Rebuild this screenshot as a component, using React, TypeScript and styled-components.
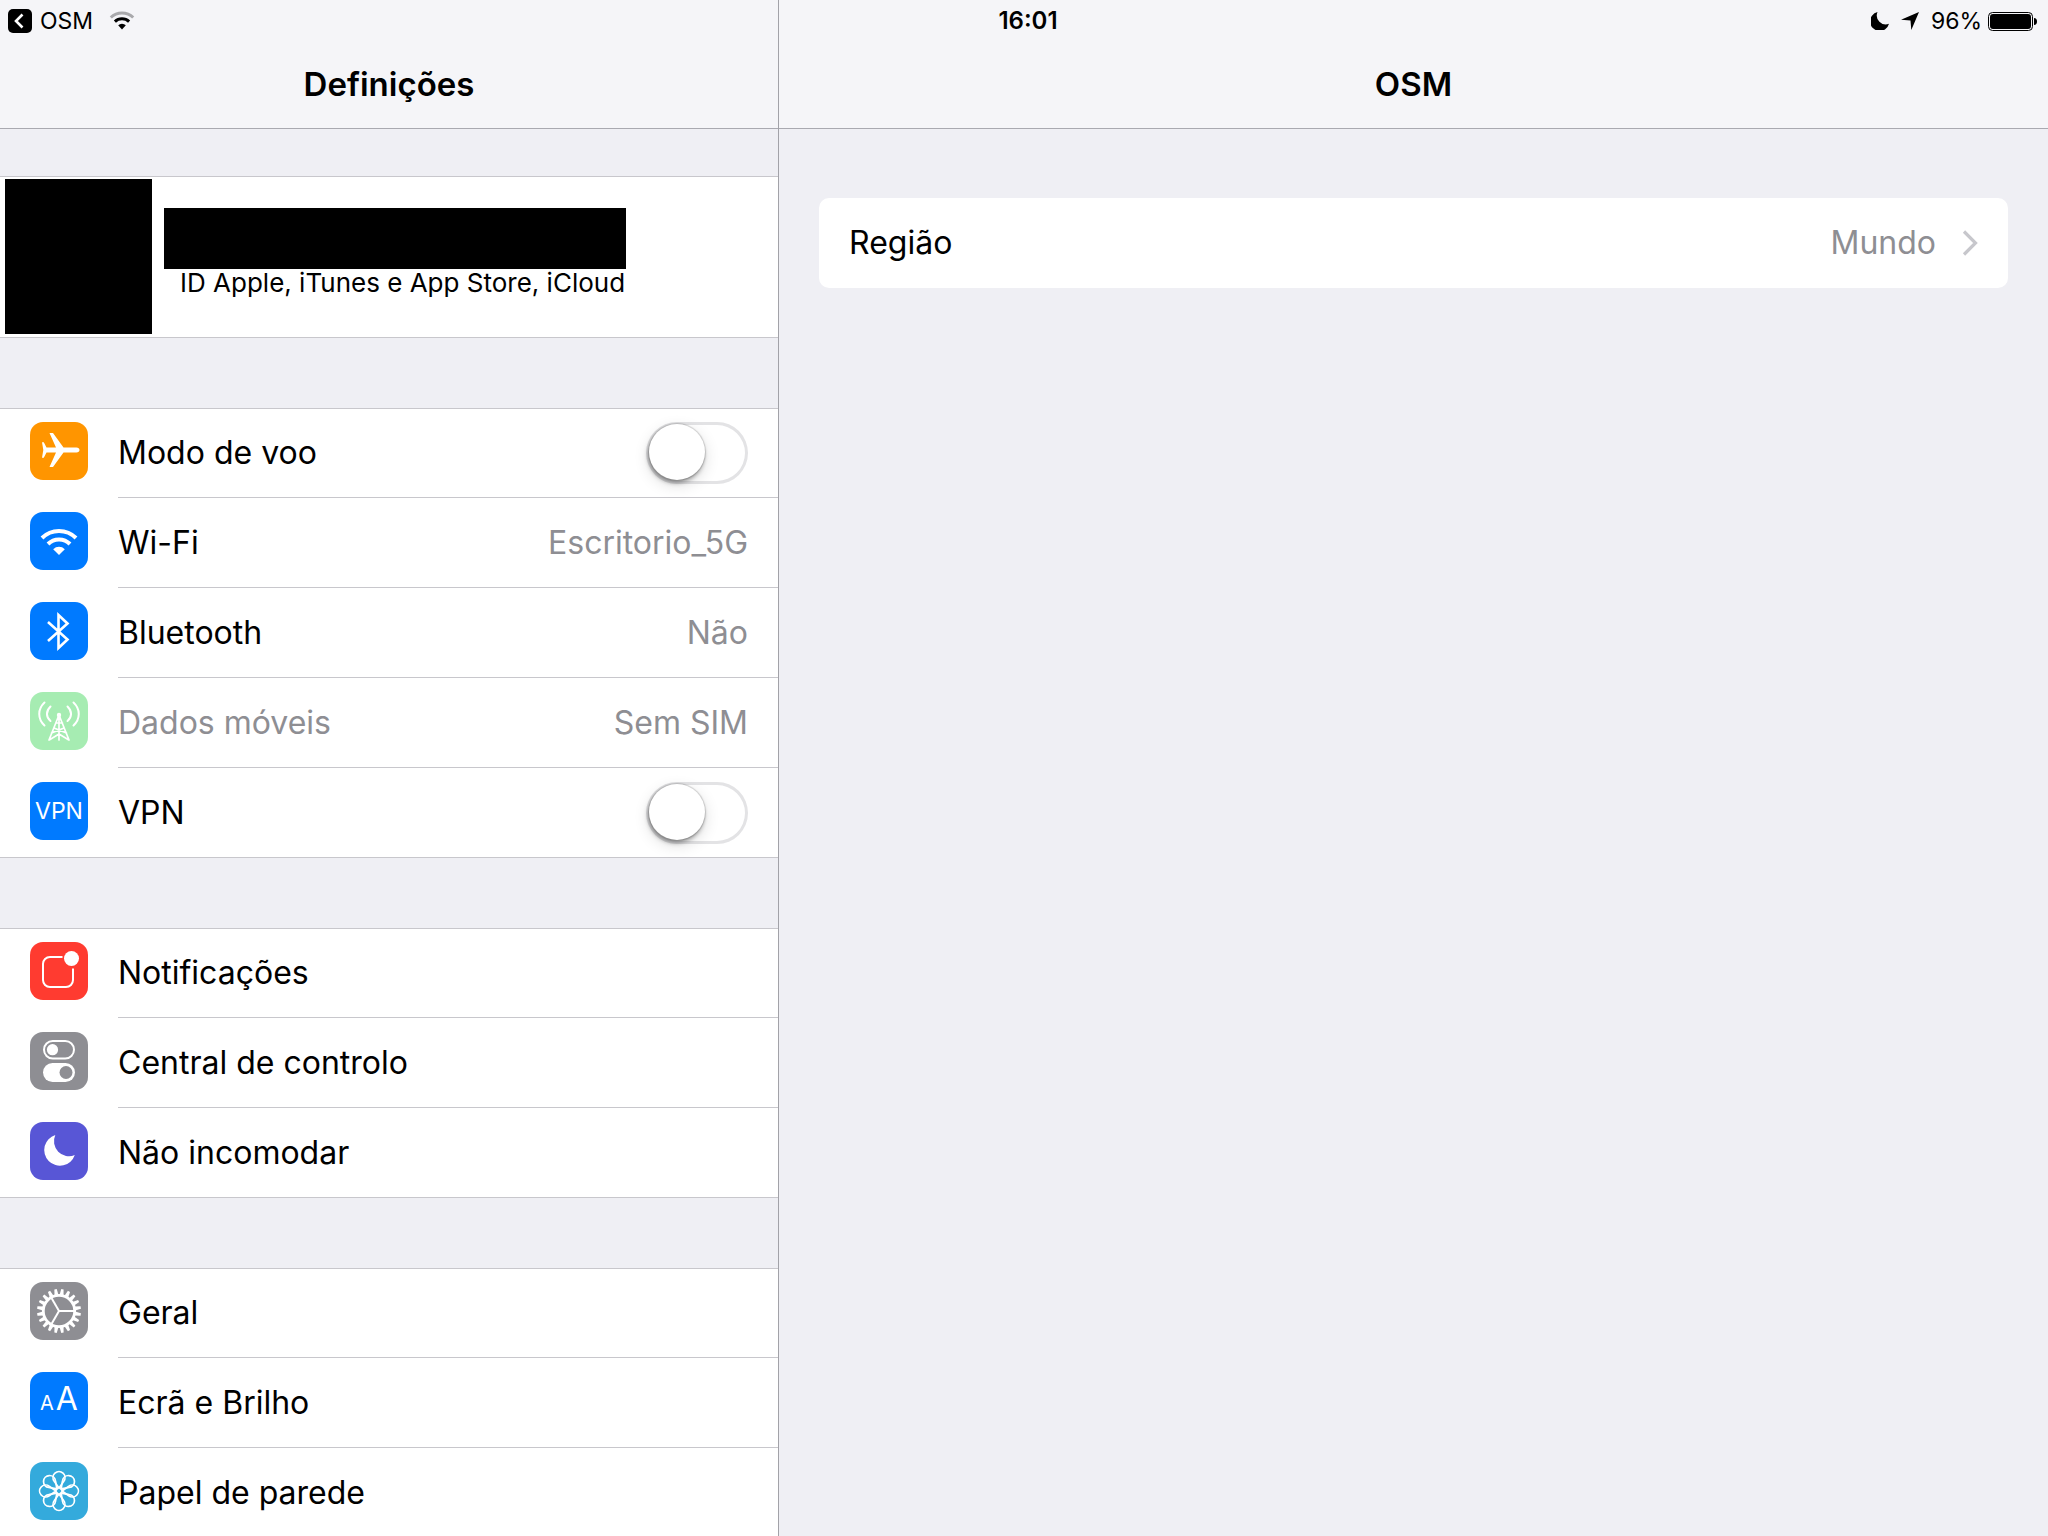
import React from "react";
import styled, { createGlobalStyle } from "styled-components";

const GlobalStyle = createGlobalStyle`
  *, *::before, *::after { box-sizing: border-box; }
  body {
    margin: 0;
    overflow: hidden;
    background: #efeff4;
    color: #000;
    font-family: Inter, "Liberation Sans", sans-serif;
    font-size: 32px;
    line-height: 40px;
  }
  h1, h2, p, ul { margin: 0; padding: 0; font-weight: 400; }
`;

const Screen = styled.div`
  display: grid;
  grid-template-columns: 779px 1fr;
  grid-template-rows: 40px 1fr;
  height: 100vh;
  overflow: hidden;
`;

/* Status bar: shares the first grid row with both panes. */
const StatusBar = styled.header`
  grid-area: 1 / 1 / 2 / -1;
  z-index: 1;
  display: grid;
  grid-template-columns: 1fr auto 1fr;
  align-items: center;
  padding-top: 1px;
  padding-left: 8px;
  font-size: 24px;
`;

const StatusSide = styled.div<{ $end?: boolean }>`
  display: flex;
  align-items: center;
  justify-content: ${(p) => (p.$end ? "flex-end" : "flex-start")};
  padding-right: ${(p) => (p.$end ? "11px" : "0")};
  gap: ${(p) => (p.$end ? "12px" : "16px")};
  font-size: 23px;
`;

const BackLink = styled.a`
  display: flex;
  align-items: center;
  gap: 8px;
  color: inherit;
  text-decoration: none;
`;

const Clock = styled.time`
  font-weight: 600;
`;

const BatteryLevel = styled.span`
  display: flex;
  align-items: center;
  gap: 6px;
`;

const Sidebar = styled.nav`
  grid-area: 1 / 1 / -1 / 2;
  border-right: 1px solid #a2a2a8;
  overflow: hidden;
`;

const Detail = styled.main`
  grid-area: 1 / 2 / -1 / 3;
`;

const TitleBar = styled.div`
  display: flex;
  justify-content: center;
  height: 129px;
  padding-top: 64px;
  background: #f5f5f8;
  border-bottom: 1px solid #a9a9b0;
`;

const Title = styled.h1`
  font-size: 33px;
  font-weight: 600;
`;

const Groups = styled.div`
  display: flex;
  flex-direction: column;
  gap: 70px;
  padding-top: 47px;
`;

const hairlines = "inset 0 1px #c8c7cc, inset 0 -1px #c8c7cc";

const Profile = styled.a`
  display: flex;
  gap: 12px;
  height: 162px;
  padding: 3px 5px;
  background: #fff;
  box-shadow: ${hairlines};
  color: inherit;
  text-decoration: none;
`;

const Avatar = styled.span`
  width: 147px;
  height: 155px;
  background: #000;
`;

const ProfileText = styled.span`
  display: flex;
  flex-direction: column;
  padding-top: 29px;
`;

const ProfileName = styled.span`
  width: 462px;
  height: 61px;
  background: #000;
`;

const ProfileNote = styled.span`
  padding-left: 16px;
  font-size: 26px;
  line-height: 28px;
`;

const Group = styled.ul`
  list-style: none;
  background: #fff;
  box-shadow: ${hairlines};
`;

const rowLayout = `
  display: flex;
  width: 100%;
  padding: 0;
  border: 0;
  background: none;
  color: inherit;
  font: inherit;
  text-align: left;
`;

const RowButton = styled.button`
  ${rowLayout}
`;

const RowLabel = styled.label`
  ${rowLayout}
`;

const RowBody = styled.span<{ $last?: boolean; $dim?: boolean }>`
  display: flex;
  flex: 1;
  align-items: center;
  justify-content: space-between;
  height: 90px;
  padding-right: 30px;
  border-bottom: 1px solid ${(p) => (p.$last ? "transparent" : "#c8c7cc")};
  color: ${(p) => (p.$dim ? "#8e8e93" : "inherit")};
`;

const Value = styled.span`
  color: #8e8e93;
`;

const Tile = styled.span<{ $color: string }>`
  display: flex;
  align-items: center;
  justify-content: center;
  width: 58px;
  height: 58px;
  margin: 14px 30px 0;
  border-radius: 13px;
  overflow: hidden;
  background: ${(p) => p.$color};
  color: #fff;
`;

const TileText = styled.span<{ $size: number }>`
  font-size: ${(p) => p.$size}px;
`;

const Letters = styled.span`
  display: flex;
  align-items: baseline;
  gap: 2px;
`;

const Switch = styled.input`
  appearance: none;
  display: flex;
  width: 102px;
  height: 62px;
  margin: 0;
  padding: 2px 3px;
  border-radius: 31px;
  background: #fff;
  box-shadow: inset 0 0 0 3px #e3e3e5;

  &::before {
    content: "";
    width: 56px;
    height: 56px;
    border-radius: 50%;
    background: #fff;
    box-shadow: 0 0 1px 1px rgba(0, 0, 0, 0.14), -1px 3px 4px rgba(0, 0, 0, 0.35),
      0 5px 16px rgba(0, 0, 0, 0.14);
  }
  &:checked { box-shadow: inset 0 0 0 31px #4cd964; }
  &:checked::before { margin-left: 40px; }
`;

const Card = styled.section`
  margin: 69px 40px 0;
  border-radius: 10px;
  background: #fff;
`;

const CardRow = styled.button`
  ${rowLayout}
  align-items: center;
  height: 90px;
  padding: 0 30px;
  gap: 26px;
`;

const CardLabel = styled.span`
  flex: 1;
`;

const Svg = ({ size = 58, children }: { size?: number; children: React.ReactNode }) => (
  <svg width={size} height={size} viewBox={`0 0 ${size} ${size}`} fill="none" aria-hidden="true">
    {children}
  </svg>
);

const PlaneIcon = () => (
  <Svg>
    <path
      fill="#fff"
      d="M46.500 25.600 C48.300 25.600 49.500 26.600 49.500 28 C49.500 29.400 48.300 30.400 46.500 30.400 H33.500 L23 45 H19.500 L26 30.400 H16.500 L13.800 35.700 H12 L13.300 28 L12 20.300 H13.800 L16.500 25.600 H26 L19.500 11 H23 L33.500 25.600 Z"
    />
  </Svg>
);

const WifiIcon = () => (
  <Svg>
    <g stroke="#fff" strokeWidth="4">
      <path d="M12 26 A24 24 0 0 1 46 26" />
      <path d="M18 32 A15.500 15.500 0 0 1 40 32" />
    </g>
    <path fill="#fff" d="M29 43 L23.200 37.200 A8.200 8.200 0 0 1 34.800 37.200 Z" />
  </Svg>
);

const BluetoothIcon = () => (
  <Svg>
    <path d="M18 20 L37.500 37.500 L28.500 46 V13 L37.500 21.500 L18 39" stroke="#fff" strokeWidth="2.600" />
  </Svg>
);

const CellularIcon = () => (
  <Svg>
    <g stroke="#fff" strokeWidth="2" strokeLinecap="round">
      <path d="M14.500 10.500 C7.500 17 7.500 27 14.500 33.500 M43.500 10.500 C50.500 17 50.500 27 43.500 33.500" />
      <path d="M20.500 14.500 C15.800 19 15.800 25 20.500 29 M37.500 14.500 C42.200 19 42.200 25 37.500 29" />
      <path d="M29 23 L19 48 M29 23 L39 48 M29 23 V48 M26 31 L32.500 31 M24 36 L36.500 41 M34 36 L21.500 41 M20 47.500 L29 42 L38 47.500" strokeWidth="1.700" />
    </g>
    <circle cx="29" cy="23" r="2.200" fill="#fff" />
  </Svg>
);

const NotificationsIcon = () => (
  <Svg>
    <path
      d="M32.500 15 H20 A7 7 0 0 0 13 22 V38 A7 7 0 0 0 20 45 H36 A7 7 0 0 0 43 38 V26.500"
      stroke="#fff"
      strokeWidth="2"
    />
    <circle cx="41.500" cy="16.500" r="7.500" fill="#fff" />
  </Svg>
);

const ControlsIcon = () => (
  <Svg>
    <rect x="14" y="9" width="30" height="17.500" rx="8.750" stroke="#fff" strokeWidth="2" />
    <circle cx="22.500" cy="17.700" r="5.600" fill="#fff" />
    <rect x="13" y="31" width="32" height="19" rx="9.500" fill="#fff" />
    <circle cx="36" cy="40.500" r="6.500" fill="#8e8e93" />
  </Svg>
);

const MoonIcon = () => (
  <Svg>
    <path fill="#fff" d="M25.300 13 A15.700 15.700 0 1 0 44.800 33 A15 15 0 0 1 25.300 13 Z" />
  </Svg>
);

const teeth = Array.from({ length: 20 }, (_, i) => i * 18 + 9);
const spokes = [0, 120, 240];

const GearIcon = () => (
  <Svg>
    <g fill="#fff">
      {teeth.map((a) => (
        <path key={a} d="M45 27 L51 27.800 V30.200 L45 31 Z" transform={`rotate(${a} 29 29)`} />
      ))}
    </g>
    <g stroke="#fff">
      <circle cx="29" cy="29" r="15.700" strokeWidth="2.800" />
      {spokes.map((a) => (
        <path key={a} d="M29 29 H44" strokeWidth="2" transform={`rotate(${a} 29 29)`} />
      ))}
    </g>
  </Svg>
);

const petals = Array.from({ length: 8 }, (_, i) => i * 45);

const FlowerIcon = () => (
  <Svg>
    <g stroke="#fff" strokeWidth="1.700">
      {petals.map((a) => (
        <path
          key={a}
          d="M29 26 L24.200 19.200 A6 6 0 1 1 33.800 19.200 Z"
          transform={`rotate(${a} 29 29)`}
        />
      ))}
      <circle cx="29" cy="29" r="3.300" />
    </g>
  </Svg>
);

type Item = {
  label: string;
  color: string;
  icon: React.ReactNode;
  value?: string;
  toggle?: boolean;
  dim?: boolean;
};

const groups: Item[][] = [
  [
    { label: "Modo de voo", color: "#ff9500", icon: <PlaneIcon />, toggle: true },
    { label: "Wi-Fi", color: "#007aff", icon: <WifiIcon />, value: "Escritorio_5G" },
    { label: "Bluetooth", color: "#007aff", icon: <BluetoothIcon />, value: "Não" },
    { label: "Dados móveis", color: "#a6ecb2", icon: <CellularIcon />, value: "Sem SIM", dim: true },
    { label: "VPN", color: "#007aff", icon: <TileText $size={23}>VPN</TileText>, toggle: true },
  ],
  [
    { label: "Notificações", color: "#ff3b30", icon: <NotificationsIcon /> },
    { label: "Central de controlo", color: "#8e8e93", icon: <ControlsIcon /> },
    { label: "Não incomodar", color: "#5856d6", icon: <MoonIcon /> },
  ],
  [
    { label: "Geral", color: "#8e8e93", icon: <GearIcon /> },
    {
      label: "Ecrã e Brilho",
      color: "#007aff",
      icon: (
        <Letters>
          <TileText $size={20}>A</TileText>
          <TileText $size={32}>A</TileText>
        </Letters>
      ),
    },
    { label: "Papel de parede", color: "#34aadc", icon: <FlowerIcon /> },
  ],
];

const SettingsRow = ({ item, last }: { item: Item; last: boolean }) => {
  const Row = item.toggle ? RowLabel : RowButton;
  return (
    <li>
      <Row>
        <Tile $color={item.color} aria-hidden="true">
          {item.icon}
        </Tile>
        <RowBody $last={last} $dim={item.dim}>
          <span>{item.label}</span>
          {item.value && <Value>{item.value}</Value>}
          {item.toggle && <Switch type="checkbox" aria-label={item.label} />}
        </RowBody>
      </Row>
    </li>
  );
};

export default function App() {
  return (
    <>
      <GlobalStyle />
      <Screen>
        <StatusBar>
          <StatusSide>
            <BackLink href="#osm">
              <Svg size={24}>
                <rect width="24" height="24" rx="5" fill="#000" />
                <path d="M14.500 5.500 L8 12 L14.500 18.500" stroke="#fff" strokeWidth="2.600" />
              </Svg>
              OSM
            </BackLink>
            <Svg size={26}>
              <path d="M1.800 9.500 A16 16 0 0 1 24.200 9.500" stroke="#a9a9ac" strokeWidth="3" />
              <path d="M5.900 13.600 A10.200 10.200 0 0 1 20.100 13.600" stroke="#000" strokeWidth="3" />
              <path d="M13 21.500 L9.200 17.200 A5.400 5.400 0 0 1 16.800 17.200 Z" fill="#000" />
            </Svg>
          </StatusSide>
          <Clock>16:01</Clock>
          <StatusSide $end>
            <Svg size={18}>
              <path fill="#000" d="M6.500 0 A9.600 9.600 0 1 0 18 11.800 A9 9 0 0 1 6.500 0 Z" />
            </Svg>
            <Svg size={18}>
              <path fill="#000" d="M18 0 L10.300 18 L9.500 8.500 L0 7.700 Z" />
            </Svg>
            <BatteryLevel>
              96%
              <svg width="49" height="19" viewBox="0 0 49 19" fill="none" aria-hidden="true">
                <rect x="0.500" y="0.500" width="44" height="18" rx="4" stroke="#000" />
                <rect x="2" y="2" width="41" height="15" rx="3" fill="#000" />
                <path d="M46 6 C48 6 49 7.500 49 9.500 C49 11.500 48 13 46 13 Z" fill="#000" />
              </svg>
            </BatteryLevel>
          </StatusSide>
        </StatusBar>

        <Sidebar aria-label="Definições">
          <TitleBar>
            <Title>Definições</Title>
          </TitleBar>
          <Groups>
            <Profile href="#conta">
              <Avatar />
              <ProfileText>
                <ProfileName />
                <ProfileNote>ID Apple, iTunes e App Store, iCloud</ProfileNote>
              </ProfileText>
            </Profile>
            {groups.map((items) => (
              <Group key={items[0].label}>
                {items.map((item, i) => (
                  <SettingsRow key={item.label} item={item} last={i === items.length - 1} />
                ))}
              </Group>
            ))}
          </Groups>
        </Sidebar>

        <Detail>
          <TitleBar>
            <Title as="h2">OSM</Title>
          </TitleBar>
          <Card>
            <CardRow>
              <CardLabel>Região</CardLabel>
              <Value>Mundo</Value>
              <svg width="16" height="26" viewBox="0 0 16 26" fill="none" aria-hidden="true">
                <path d="M2 1.500 L13.500 13 L2 24.500" stroke="#c7c7cc" strokeWidth="3.200" />
              </svg>
            </CardRow>
          </Card>
        </Detail>
      </Screen>
    </>
  );
}
